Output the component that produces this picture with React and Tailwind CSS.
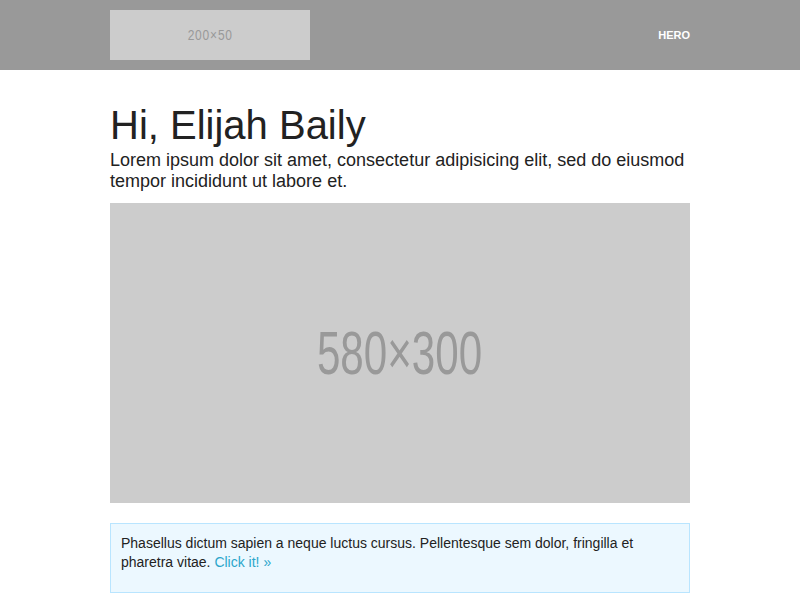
export default function App() {
  return (
    <div className="min-h-[600px] bg-white font-['Liberation_Sans',Arial,sans-serif] text-[#222222]">
      {/* header bar */}
      <div className="h-[70px] bg-[#999999]">
        <div className="mx-auto flex h-full w-[580px] items-center justify-between">
          <div className="flex h-[50px] w-[200px] items-center justify-center bg-[#cccccc]">
            <span className="inline-block scale-x-[0.8] text-[15px] tracking-[1px] text-[#999999]">200×50</span>
          </div>
          <span className="text-[11px] font-bold leading-none text-white">HERO</span>
        </div>
      </div>

      {/* content */}
      <div className="mx-auto w-[580px] pt-[30px]">
        <h1 className="text-[40px] leading-[50px]">Hi, Elijah Baily</h1>
        <p className="text-[18px] leading-[21px]">
          Lorem ipsum dolor sit amet, consectetur adipisicing elit, sed do eiusmod tempor incididunt ut labore et.
        </p>

        <div className="mt-[11px] flex h-[300px] items-center justify-center bg-[#cccccc]">
          <span className="inline-block scale-x-[0.68] text-[62px] leading-none text-[#999999]">580×300</span>
        </div>

        <div className="mt-[20px] border border-[#b9e5ff] bg-[#ecf8ff] p-[10px]">
          <p className="mb-[10px] text-[14px] leading-[19px]">
            Phasellus dictum sapien a neque luctus cursus. Pellentesque sem dolor, fringilla et pharetra vitae.{" "}
            <a className="text-[#2ba6cb]">Click it! »</a>
          </p>
        </div>
      </div>
    </div>
  );
}
